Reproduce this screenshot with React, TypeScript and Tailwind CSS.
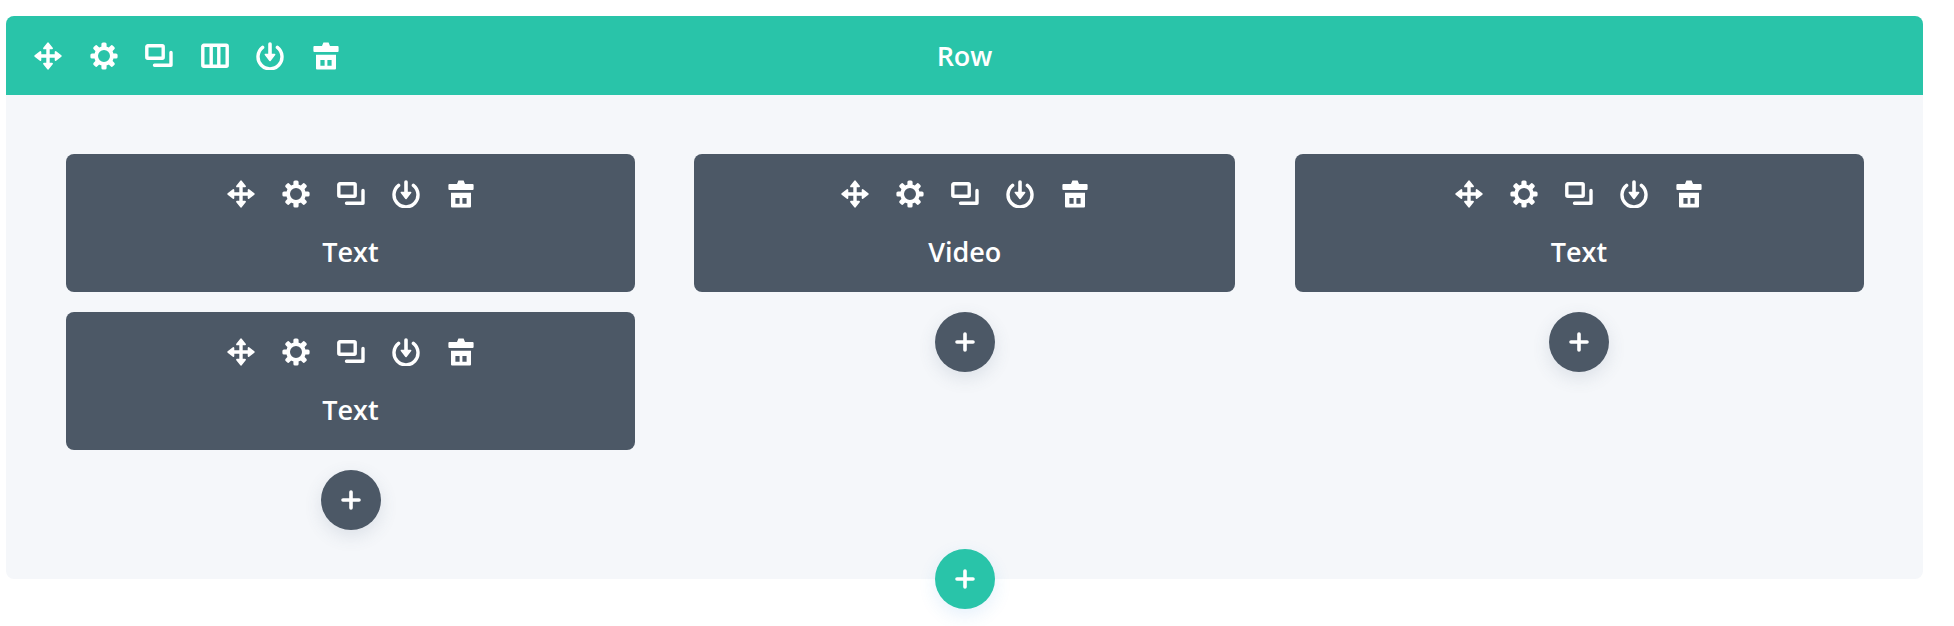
import React from "react";

const box = "w-7 h-7 shrink-0";

function MoveIcon() {
  return (
    <svg viewBox="0 0 28 28" className={box} fill="currentColor" stroke="currentColor" strokeLinejoin="round">
      <path d="M3.5 14H24.5M14 3.5V24.5" fill="none" strokeWidth="3.4" />
      <path d="M14 1.2L18 6.4H10ZM14 26.8L18 21.6H10ZM1.2 14L6.4 10V18ZM26.8 14L21.6 10V18Z" strokeWidth="1.8" />
    </svg>
  );
}

function GearIcon() {
  const angles = [0, 45, 90, 135, 180, 225, 270, 315];
  return (
    <svg viewBox="0 0 28 28" className={box} fill="currentColor">
      {angles.map((a) => (
        <rect key={a} x="11.4" y="0.4" width="5.2" height="6.6" rx="1.6" transform={`rotate(${a} 14 14)`} />
      ))}
      <circle cx="14" cy="14" r="7.9" fill="none" stroke="currentColor" strokeWidth="3.8" />
    </svg>
  );
}

function CloneIcon() {
  return (
    <svg viewBox="0 0 28 28" className={box} fill="none" stroke="currentColor" strokeWidth="3.4" strokeLinejoin="round">
      <rect x="1.8" y="3.8" width="16.4" height="12.4" rx="1" />
      <path d="M9.5 23.2H26V10.5" strokeLinecap="round" />
    </svg>
  );
}

function ColumnsIcon() {
  return (
    <svg viewBox="0 0 28 28" className={box} fill="none" stroke="currentColor" strokeWidth="3.4" strokeLinejoin="round">
      <rect x="1.8" y="3.3" width="24.4" height="21" rx="1" />
      <path d="M10.2 3.3V24.3M17.8 3.3V24.3" />
    </svg>
  );
}

function SaveIcon() {
  return (
    <svg viewBox="0 0 28 28" className={box} fill="none" stroke="currentColor">
      <path d="M6.6 5.4A12 12 0 1 0 21.4 5.4" strokeWidth="3.4" strokeLinecap="round" />
      <path d="M14 2V13" strokeWidth="3.6" strokeLinecap="round" />
      <path d="M9.4 12.5H18.6L14 18.4Z" fill="currentColor" strokeWidth="1.6" strokeLinejoin="round" />
    </svg>
  );
}

function TrashIcon() {
  return (
    <svg viewBox="0 0 28 28" className={box} fill="currentColor">
      <path d="M11.4 .4H16.6L18 4H25.6Q26.6 4 26.6 5V9Q26.6 10 25.6 10H2.4Q1.4 10 1.4 9V5Q1.4 4 2.4 4H10Z" />
      <path
        fillRule="evenodd"
        d="M4 12.8H24V26.6Q24 27.6 23 27.6H5Q4 27.6 4 26.6ZM8.4 18V23.8H12.6V18ZM15.4 18V23.8H19.6V18Z"
      />
    </svg>
  );
}

function Plus() {
  return (
    <svg viewBox="0 0 20 20" className="w-5 h-5" fill="none" stroke="currentColor" strokeWidth="3.6" strokeLinecap="round">
      <path d="M2 10H18M10 2V18" />
    </svg>
  );
}

function Module({ label }: { label: string }) {
  return (
    <div className="h-[138px] rounded-lg bg-[#4c5866] text-white flex flex-col items-center pt-[26px]">
      <div className="flex gap-[27px]">
        <MoveIcon />
        <GearIcon />
        <CloneIcon />
        <SaveIcon />
        <TrashIcon />
      </div>
      <div className="mt-[26px] text-[27px] leading-[36px] font-[550]">{label}</div>
    </div>
  );
}

function AddButton() {
  return (
    <button className="mx-auto mt-5 w-[60px] h-[60px] rounded-full bg-[#4c5866] text-white flex items-center justify-center shadow-[0_6px_18px_rgba(70,90,120,0.14)]">
      <Plus />
    </button>
  );
}

export default function App() {
  return (
    <div className="w-[1954px] h-[626px] bg-white pt-4 pl-[6px] overflow-hidden" style={{ fontFamily: '"Open Sans", sans-serif' }}>
      <div className="relative w-[1917px] h-[563px] rounded-lg bg-[#f5f7fa]">
        <div className="relative h-[79px] rounded-t-lg bg-[#29c4a9] text-white flex items-center pl-7">
          <div className="flex gap-[27.5px]">
            <MoveIcon />
            <GearIcon />
            <CloneIcon />
            <ColumnsIcon />
            <SaveIcon />
            <TrashIcon />
          </div>
          <div className="absolute inset-0 pt-px flex items-center justify-center text-[27px] font-[550]">Row</div>
        </div>
        <div className="grid grid-cols-[569px_541px_569px] gap-x-[59.25px] pl-[60px] pt-[59px]">
          <div className="flex flex-col">
            <div className="flex flex-col gap-5">
              <Module label="Text" />
              <Module label="Text" />
            </div>
            <AddButton />
          </div>
          <div className="flex flex-col">
            <Module label="Video" />
            <AddButton />
          </div>
          <div className="flex flex-col">
            <Module label="Text" />
            <AddButton />
          </div>
        </div>
        <button className="absolute left-[929px] top-[533px] w-[60px] h-[60px] rounded-full bg-[#29c4a9] text-white flex items-center justify-center shadow-[0_6px_18px_rgba(43,135,218,0.12)]">
          <Plus />
        </button>
      </div>
    </div>
  );
}
